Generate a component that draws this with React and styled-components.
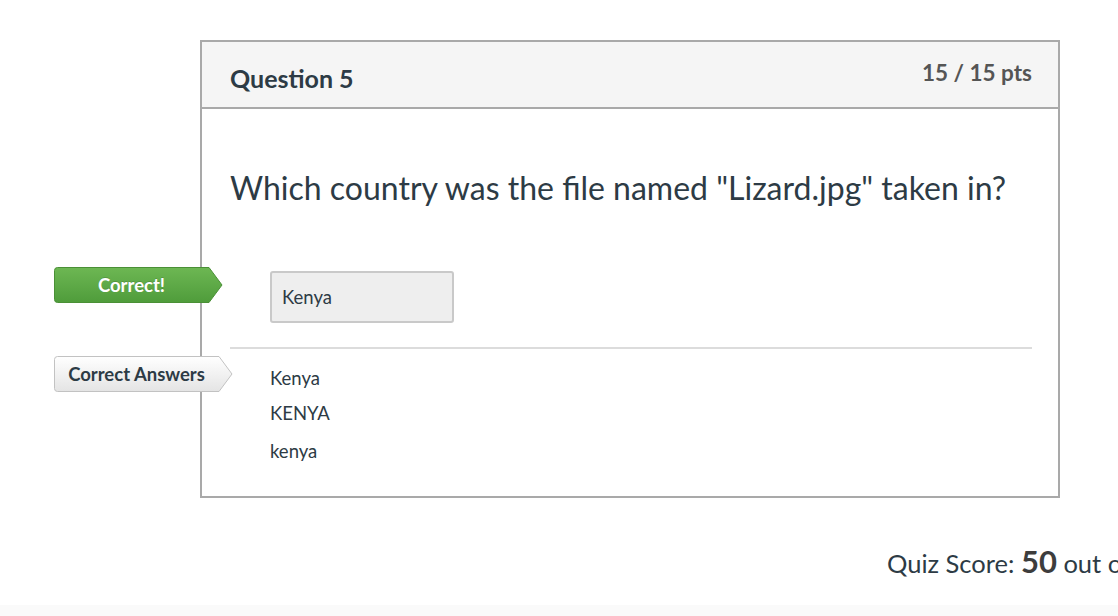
import React from "react";
import styled, { createGlobalStyle } from "styled-components";

const GlobalStyle = createGlobalStyle`
  html, body {
    margin: 0;
    padding: 0;
    background: #fff;
    overflow: hidden;
  }
  body {
    font-family: Lato, "Open Sans", "Liberation Sans", sans-serif;
    color: #2d3b45;
  }
`;

const Page = styled.div`
  width: 1118px;
  height: 616px;
  overflow: hidden;
  display: flex;
  flex-direction: column;
`;

const Card = styled.div`
  margin: 40px 0 0 200px;
  width: 860px;
  box-sizing: border-box;
  border: 2px solid #a9a9a9;
`;

const Header = styled.div`
  height: 67px;
  box-sizing: border-box;
  background: #f5f5f5;
  border-bottom: 2px solid #a9a9a9;
  display: flex;
  justify-content: space-between;
  align-items: flex-start;
  padding: 0 26px 0 28px;
`;

const Title = styled.h2`
  margin: 21px 0 0;
  font-size: 25px;
  font-weight: 700;
  line-height: 30px;
  color: #2d3b45;
`;

const Points = styled.div`
  margin-top: 18px;
  font-size: 22.5px;
  font-weight: 700;
  line-height: 26px;
  color: #555;
`;

const Body = styled.div`
  padding: 0 26px 33px 28px;
`;

const QuestionText = styled.p`
  margin: 60px 0 0;
  font-size: 32px;
  line-height: 38px;
  color: #2d3b45;
`;

const AnswerRow = styled.div`
  position: relative;
  margin: 64px 0 0 40px;
`;

const AnswerBox = styled.div`
  width: 184px;
  height: 52px;
  box-sizing: border-box;
  background: #eeeeee;
  border: 2px solid #c9c9c9;
  border-radius: 3px;
  padding: 0 10px;
  display: flex;
  align-items: center;
  font-size: 18.5px;
  color: #2d3b45;
`;

const Divider = styled.hr`
  margin: 24px 0 0;
  border: none;
  border-top: 2px solid #dcdcdc;
`;

const AnswerList = styled.div`
  position: relative;
  margin: 17px 0 0 40px;
  display: flex;
  flex-direction: column;
  gap: 11px;
`;

const AnswerItem = styled.div`
  font-size: 18.5px;
  line-height: 24px;
  color: #2d3b45;
  margin-top: ${(p) => (p.$shift ? p.$shift : 0)}px;
`;

const Tag = styled.div`
  position: absolute;
  top: ${(p) => p.$top}px;
  left: -216px;
  width: ${(p) => p.$width}px;
  height: 36px;
  display: flex;
  align-items: center;
  z-index: 2;
`;

const TagShape = styled.svg`
  position: absolute;
  inset: 0;
  width: 100%;
  height: 100%;
`;

const TagText = styled.span`
  position: relative;
  width: ${(p) => p.$textWidth}px;
  text-align: center;
  font-size: 18.5px;
  font-weight: 700;
  color: ${(p) => (p.$light ? "#2d3b45" : "#fff")};
  text-shadow: ${(p) => (p.$light ? "none" : "0 -1px 0 rgba(0,0,0,0.15)")};
`;

const Score = styled.div`
  margin: 45px 0 0 887px;
  white-space: nowrap;
  font-size: 25.5px;
  line-height: 36px;
  color: #2d3b45;
`;

const ScoreValue = styled.strong`
  font-size: 31px;
  font-weight: 700;
  color: #3d3d3d;
`;

const Footer = styled.div`
  margin-top: auto;
  height: 11px;
  background: #fafafa;
`;

function TagLabel({ top, width, variant, children }) {
  const light = variant === "light";
  const body = width - 14;
  const d = `M3.5 0.5 H${body} L${width - 1} 18 L${body} 35.5 H3.5 Q0.5 35.5 0.5 32.5 V3.5 Q0.5 0.5 3.5 0.5 Z`;
  const id = light ? "tag-light" : "tag-green";
  return (
    <Tag $top={top} $width={width}>
      <TagShape viewBox={`0 0 ${width} 36`} preserveAspectRatio="none">
        <defs>
          <linearGradient id={id} x1="0" y1="0" x2="0" y2="1">
            {light ? (
              <>
                <stop offset="0" stopColor="#ffffff" />
                <stop offset="1" stopColor="#e4e4e4" />
              </>
            ) : (
              <>
                <stop offset="0" stopColor="#6db753" />
                <stop offset="1" stopColor="#4f9c3b" />
              </>
            )}
          </linearGradient>
        </defs>
        <path
          d={d}
          fill={`url(#${id})`}
          stroke={light ? "#c2c2c2" : "#4a9036"}
          strokeWidth="1"
        />
      </TagShape>
      <TagText $textWidth={body} $light={light}>
        {children}
      </TagText>
    </Tag>
  );
}

export default function App() {
  return (
    <>
      <GlobalStyle />
      <Page>
        <Card>
          <Header>
            <Title>Question 5</Title>
            <Points>15 / 15 pts</Points>
          </Header>
          <Body>
            <QuestionText>
              Which country was the file named "Lizard.jpg" taken in?
            </QuestionText>
            <AnswerRow>
              <TagLabel top={-4} width={169} variant="green">
                Correct!
              </TagLabel>
              <AnswerBox>Kenya</AnswerBox>
            </AnswerRow>
            <Divider />
            <AnswerList>
              <TagLabel top={-10} width={179} variant="light">
                Correct Answers
              </TagLabel>
              <AnswerItem>Kenya</AnswerItem>
              <AnswerItem>KENYA</AnswerItem>
              <AnswerItem $shift={3}>kenya</AnswerItem>
            </AnswerList>
          </Body>
        </Card>
        <Score>
          Quiz Score: <ScoreValue>50</ScoreValue> out of 50
        </Score>
        <Footer />
      </Page>
    </>
  );
}
